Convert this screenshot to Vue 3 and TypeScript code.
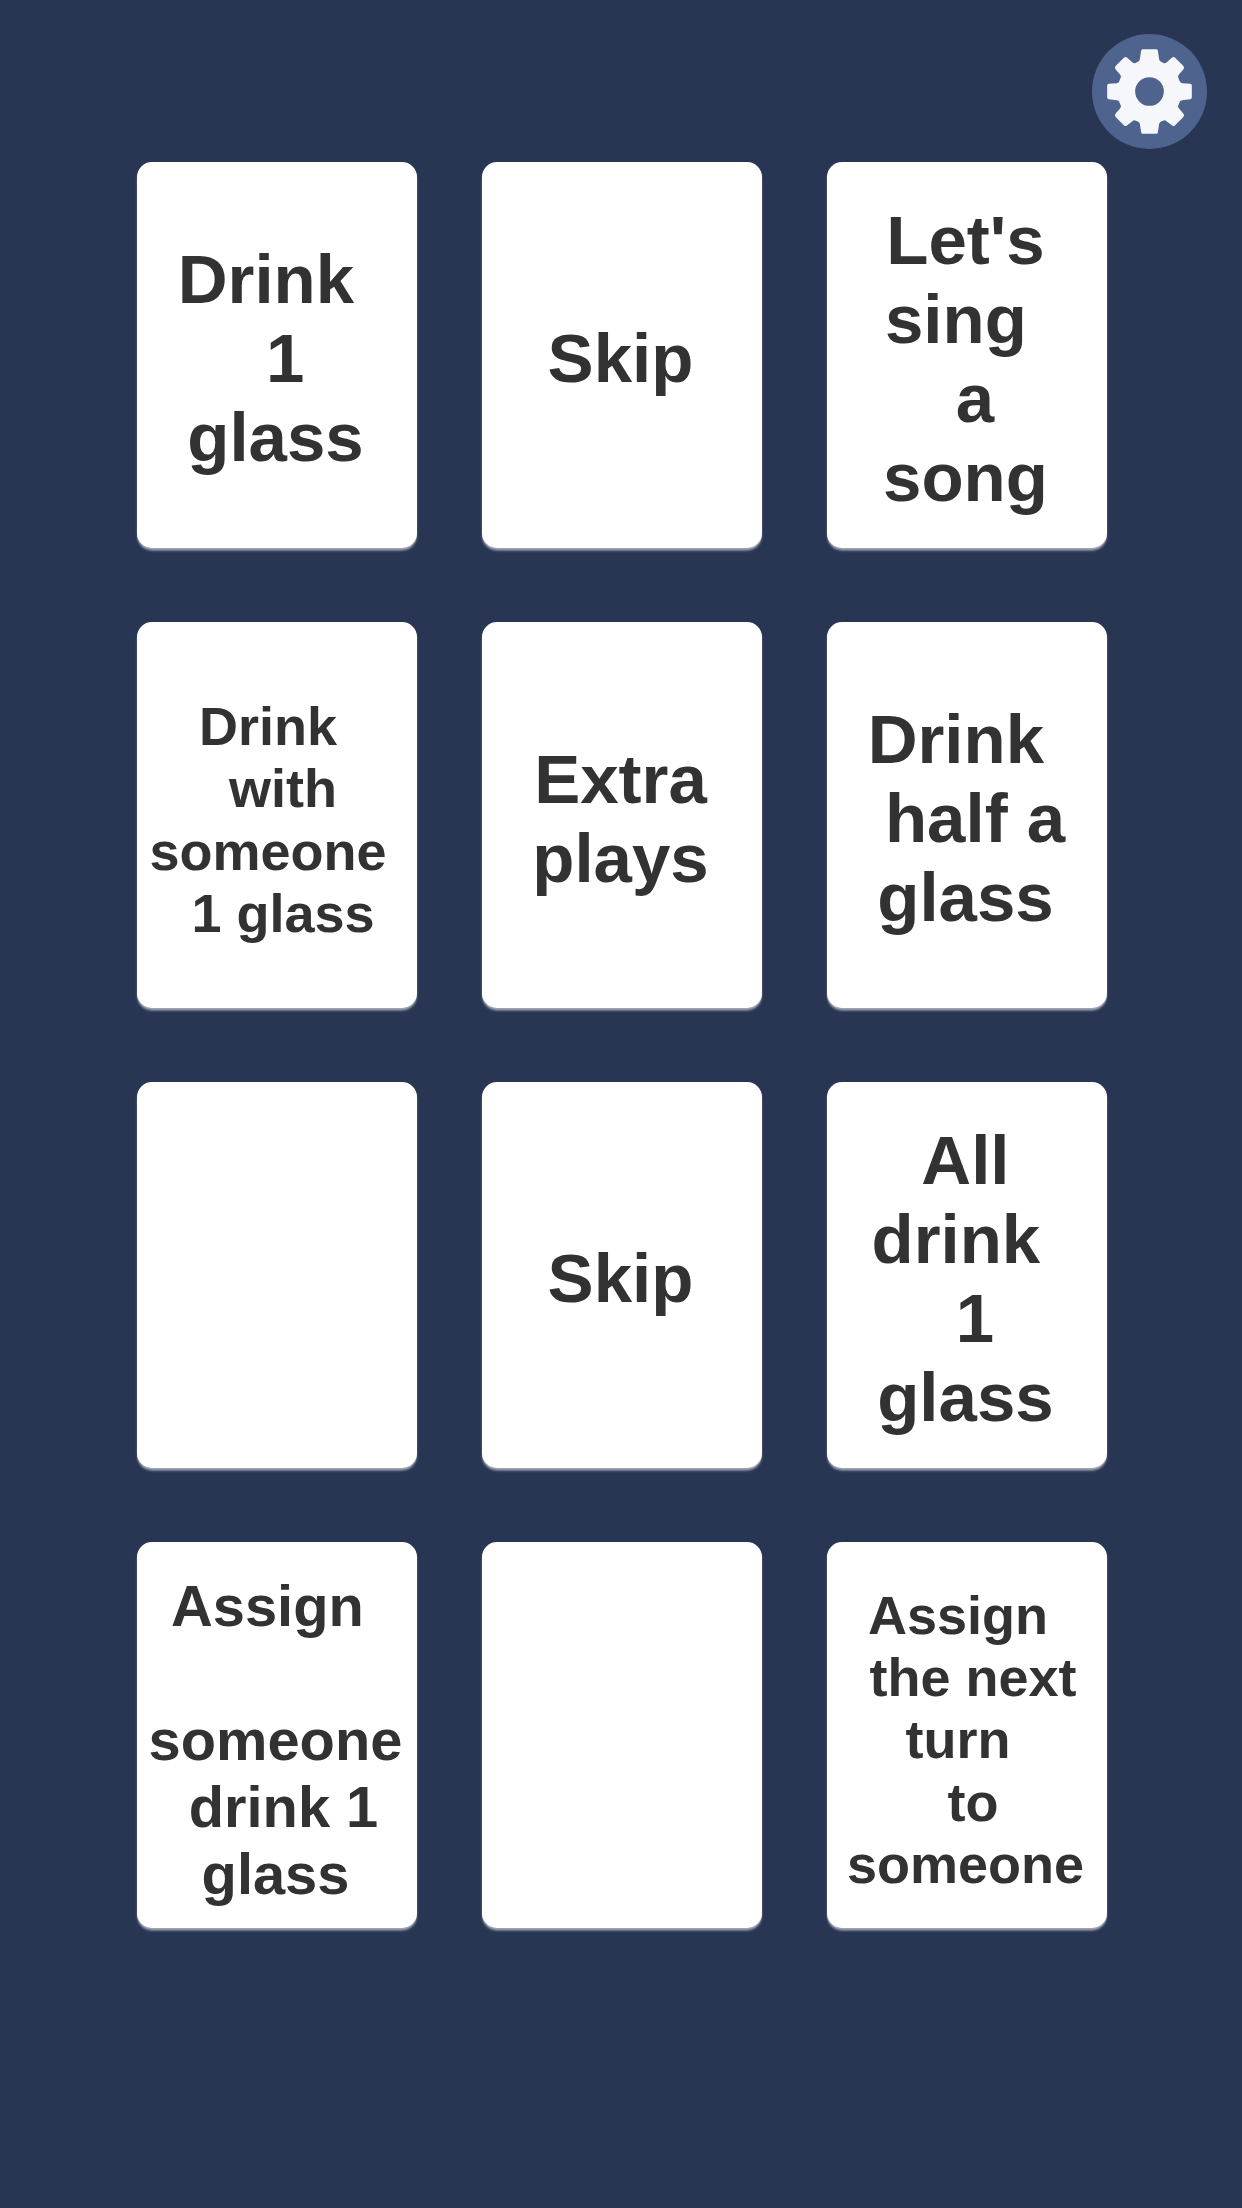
<script setup lang="ts">
interface Card {
  size: 'large' | 'medium' | 'small'
  text: string
}

// Leading and trailing spaces are part of each line's centring.
const cards: Card[] = [
  { size: 'large', text: 'Drink \n 1\nglass' },
  { size: 'large', text: 'Skip' },
  { size: 'large', text: "Let's\nsing \n a\nsong" },
  { size: 'small', text: 'Drink \n with\nsomeone \n 1 glass' },
  { size: 'large', text: 'Extra\nplays' },
  { size: 'large', text: 'Drink \n half a\nglass' },
  { size: 'large', text: '' },
  { size: 'large', text: 'Skip' },
  { size: 'large', text: 'All\ndrink \n 1\nglass' },
  { size: 'medium', text: 'Assign \n\nsomeone\n drink 1\nglass' },
  { size: 'large', text: '' },
  { size: 'small', text: 'Assign \n the next\nturn \n to\nsomeone' },
]
</script>

<template>
  <main class="screen">
    <header class="toolbar">
      <button class="settings" type="button" aria-label="Settings">
        <svg class="gear" viewBox="-172.5 -172.5 345 345">
          <path
            fill-rule="evenodd"
            d="M-20-127H20Q24-127 25-123L29-97Q30-91 35-89L43-85Q47-84 51-87L67-101Q71-106 76-102L101-77Q106-72 102-67L89-52Q84-46 86-43L91-30Q92-26 98-25L122-23Q127-22 127-18V18Q127 22 122 23L98 26Q92 27 91 31L86 43Q84 46 89 52L102 67Q106 72 101 77L76 102Q71 106 67 101L51 89Q47 85 43 87L35 90Q30 92 29 97L25 123Q24 127 20 127H-20Q-24 127-25 123L-29 97Q-30 92-35 90L-43 87Q-47 85-51 89L-67 101Q-71 106-76 102L-101 77Q-106 72-102 67L-89 52Q-84 46-86 43L-91 31Q-92 27-98 26L-122 23Q-127 22-127 18V-18Q-127-22-122-23L-98-25Q-92-26-91-30L-86-43Q-84-46-89-52L-102-67Q-106-72-101-77L-76-102Q-71-106-67-101L-51-87Q-47-84-43-85L-35-89Q-30-91-29-97L-25-123Q-24-127-20-127ZM0-43A43 43 0 1 0 0 43A43 43 0 1 0 0-43Z"
          />
        </svg>
      </button>
    </header>
    <section class="board">
      <article v-for="(card, i) in cards" :key="i" class="card">
        <p class="label" :class="card.size">{{ card.text }}</p>
      </article>
    </section>
  </main>
</template>

<style>
body {
  margin: 0;
  background: #283653;
}
</style>

<style scoped>
.screen {
  box-sizing: border-box;
  width: 1242px;
  height: 2208px;
  padding-top: 34px;
  overflow: hidden;
  background: #283653;
  font-family: 'Liberation Sans', Arial, sans-serif;
}

.toolbar {
  display: flex;
  justify-content: flex-end;
  height: 128px;
  padding-right: 35px;
}

.settings {
  width: 115px;
  height: 115px;
  padding: 0;
  border: 0;
  border-radius: 50%;
  background: #4e648e;
}

.gear {
  display: block;
  width: 115px;
  height: 115px;
  fill: #f5f7fb;
}

.board {
  display: grid;
  grid-template-columns: repeat(3, 279.4px);
  grid-auto-rows: 386px;
  gap: 74px 65.6px;
  padding-left: 137.3px;
}

.card {
  display: flex;
  align-items: center;
  justify-content: center;
  border-radius: 15px;
  background: #fff;
  box-shadow: 0 1.5px 0 #9ca2af, 0 3px 2px #7d8596;
}

.label {
  margin: 0;
  padding: 7px 3px 0 0;
  color: #323232;
  font-weight: 700;
  text-align: center;
  white-space: pre;
}

.large {
  font-size: 69px;
  line-height: 79px;
}

.medium {
  padding-top: 10px;
  font-size: 57.8px;
  line-height: 67px;
}

.small {
  padding-top: 9px;
  font-size: 54px;
  line-height: 62.2px;
}
</style>
